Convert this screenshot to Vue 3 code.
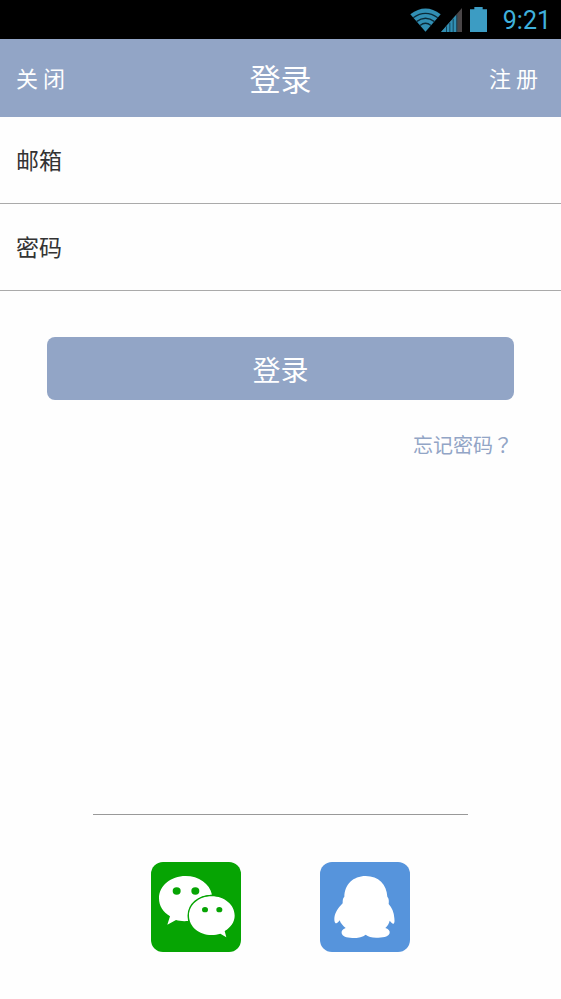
<script setup>
import { ref } from 'vue'

const email = ref('')
const password = ref('')
</script>

<template>
  <div class="screen">
    <div class="status">
      <svg class="wifi" viewBox="0 0 96 72" aria-hidden="true">
        <path d="M48 72 L1 18 Q48 -18 95 18 Z" fill="#318fb4" />
        <g fill="none" stroke="#0b2a38" stroke-width="4">
          <path d="M10 29 Q48 2 86 29" />
          <path d="M20 41 Q48 20 76 41" />
          <path d="M31 53 Q48 39 65 53" />
        </g>
      </svg>
      <svg class="signal" viewBox="0 0 63 72" aria-hidden="true">
        <path d="M0 72 L63 0 V72 Z" fill="#4a4648" />
        <path d="M0 72 L46 20 V72 Z" fill="#318fb4" />
        <g fill="#12455b">
          <rect x="15" y="55" width="3" height="17" />
          <rect x="25" y="44" width="3" height="28" />
          <rect x="35" y="32" width="3" height="40" />
          <rect x="46" y="20" width="3" height="52" />
        </g>
      </svg>
      <svg class="battery" viewBox="0 0 51 75" aria-hidden="true">
        <path d="M13 0 H38 V7 H51 V75 H0 V7 H13 Z" fill="#3c9cc3" />
      </svg>
      <time class="clock">9:21</time>
    </div>

    <header class="bar">
      <button type="button" class="bar-action">关 闭</button>
      <h1 class="title">登录</h1>
      <button type="button" class="bar-action bar-end">注 册</button>
    </header>

    <form class="form" @submit.prevent>
      <div class="row">
        <label for="email">邮箱</label>
        <input id="email" v-model="email" type="email" />
      </div>
      <div class="row">
        <label for="password">密码</label>
        <input id="password" v-model="password" type="password" />
      </div>
      <div class="actions">
        <button type="submit" class="submit">登录</button>
        <a href="#" class="forgot">忘记密码<span class="mark">？</span></a>
      </div>
    </form>

    <footer class="social">
      <button type="button" class="brand" aria-label="微信">
        <svg viewBox="18 20 270 270" aria-hidden="true">
          <rect x="18" y="20" width="270" height="270" rx="36" fill="#06a403" />
          <path
            d="M122 62 C77 62 42 91 42 129 C42 152 54 170 75 183 L67 208 L93 194 C103 197 113 198 130 197 C124 155 153 121 201 118 C194 85 161 62 122 62 Z"
            fill="#fff"
          />
          <path
            d="M200 123 C161 123 132 149 132 181 C132 214 162 239 200 239 C209 239 218 237 226 235 L244 246 L239 227 C257 216 269 200 269 181 C269 149 239 123 200 123 Z"
            fill="#fff"
            stroke="#06a403"
            stroke-width="9"
            paint-order="stroke"
          />
          <g fill="#06a403">
            <ellipse cx="95" cy="107" rx="12" ry="11" />
            <ellipse cx="151" cy="107" rx="12" ry="11" />
            <ellipse cx="180" cy="163" rx="9" ry="8" />
            <ellipse cx="223" cy="163" rx="9" ry="8" />
          </g>
        </svg>
      </button>
      <button type="button" class="brand" aria-label="QQ">
        <svg viewBox="20 20 270 270" aria-hidden="true">
          <rect x="20" y="20" width="270" height="270" rx="36" fill="#5694dc" />
          <path
            d="M157 62 C119 62 94 88 93 124 C88 129 88 135 88 144 C73 159 63 175 63 192 C63 201 66 205 69 204 C74 202 76 199 79 195 C82 204 88 211 97 218 C88 221 83 227 85 234 C87 243 99 248 117 248 C136 248 149 245 157 238 C165 245 178 248 195 247 C215 247 227 242 229 233 C230 226 225 221 216 218 C224 211 227 204 229 196 C233 201 237 206 241 205 C244 202 244 198 243 188 C242 171 236 157 226 146 C227 137 227 129 222 124 C220 87 196 62 157 62 Z"
            fill="#fff"
          />
        </svg>
      </button>
    </footer>
  </div>
</template>

<style>
body {
  margin: 0;
  background: #fefefe;
}
</style>

<style scoped>
.screen {
  display: flex;
  flex-direction: column;
  min-height: 100vh;
  background: #fefefe;
  font-family: "Noto Sans CJK SC", sans-serif;
  color: #333;
}

button {
  border: 0;
  padding: 0;
  background: none;
  font-family: inherit;
  cursor: pointer;
}

.status {
  display: flex;
  align-items: center;
  justify-content: flex-end;
  height: 39px;
  padding-right: 10px;
  background: #000;
}

.wifi {
  width: 31px;
  height: 24px;
}

.signal {
  width: 21px;
  height: 24px;
  margin-right: 8px;
}

.battery {
  width: 17px;
  height: 25px;
  margin-right: 16px;
}

.clock {
  padding-top: 2px;
  font-family: Roboto, sans-serif;
  font-size: 25px;
  line-height: 37px;
  color: #3fb0dc;
}

.bar {
  display: grid;
  grid-template-columns: 1fr auto 1fr;
  align-items: center;
  height: 78px;
  padding: 0 16px;
  background: #92a5c6;
  color: #fff;
}

.bar-action {
  justify-self: start;
  padding-bottom: 2px;
  font-size: 22px;
  line-height: 32px;
  color: #fff;
}

.bar-end {
  justify-self: end;
  padding-right: 7px;
}

.title {
  margin: 0;
  font-size: 31px;
  line-height: 40px;
  font-weight: 400;
}

.row {
  display: flex;
  align-items: center;
  gap: 16px;
  height: 84px;
  padding: 0 16px 2px;
  border-bottom: 1px solid #aaa;
  font-size: 23px;
}

.row input {
  flex: 1;
  min-width: 0;
  height: 48px;
  border: 0;
  padding: 0;
  outline: 0;
  background: none;
  font: inherit;
  color: inherit;
}

.actions {
  display: flex;
  flex-direction: column;
  gap: 30px;
  padding: 46px 47px;
}

.submit {
  height: 63px;
  border-radius: 8px;
  background: #92a5c6;
  font-size: 28px;
  color: #fff;
}

.forgot {
  align-self: flex-end;
  padding-right: 1px;
  font-size: 20px;
  line-height: 30px;
  color: #92a5c6;
  text-decoration: none;
}

.mark {
  font-family: "Noto Sans CJK TC", sans-serif;
}

.social {
  display: flex;
  justify-content: center;
  gap: 79px;
  margin: auto 93px 0;
  padding: 47px 0;
  border-top: 1px solid #999;
}

.brand {
  width: 90px;
  height: 90px;
}

.brand svg {
  display: block;
  width: 100%;
  height: 100%;
}
</style>
